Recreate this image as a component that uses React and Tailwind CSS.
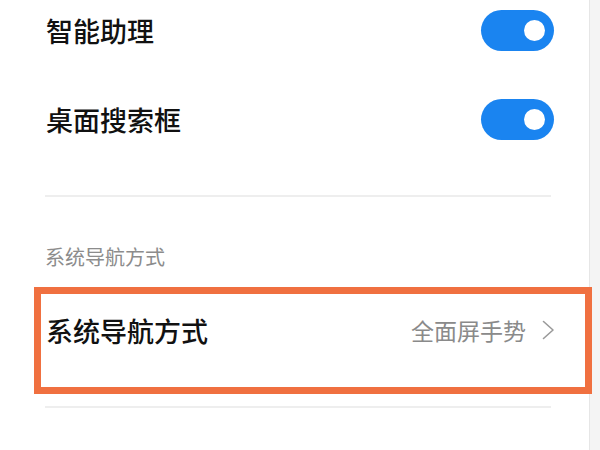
// Settings screen: 桌面设置 with navigation section
const Toggle = () => {
  return (
    <div className="w-[73px] h-[41px] rounded-full bg-[#1a84f0] flex items-center justify-end pr-[9px]">
      <div className="w-[21px] h-[21px] rounded-full bg-white" />
    </div>
  );
};

const SwitchRow = ({ label, className }) => {
  return (
    <div className={`flex items-center justify-between pl-[46px] pr-[35px] ${className}`}>
      <span className="text-[27px] leading-none font-medium text-[#111111]">{label}</span>
      <Toggle />
    </div>
  );
};

const App = () => {
  return (
    <div
      className="w-[600px] h-[450px] flex bg-[#f4f4f4] overflow-hidden"
      style={{ fontFamily: '"Noto Sans CJK SC", "Noto Sans", sans-serif' }}
    >
      {/* Main white panel */}
      <div className="w-[590px] h-full bg-white border-r border-[#e6e6e6] flex flex-col">
        <SwitchRow label="智能助理" className="h-[60px]" />
        <SwitchRow label="桌面搜索框" className="h-[58px] mt-[30px]" />

        <div className="h-[2px] bg-[#eeeeee] ml-[45px] mr-[38px] mt-[47px]" />

        <div className="pl-[45px] mt-[50px] text-[20px] leading-[20px] text-[#8c8c8c]">
          系统导航方式
        </div>

        {/* Highlighted row */}
        <div className="relative z-10 ml-[34px] w-[558px] h-[107px] mt-[20px] border-[7px] border-[#f07040] bg-white">
          <div className="h-[72px] flex items-center justify-between pl-[5px] pr-[30px]">
            <span className="text-[27px] leading-none font-medium text-[#111111]">系统导航方式</span>
            <div className="flex items-center gap-[16px]">
              <span className="text-[23px] leading-none text-[#8a8a8a]">全面屏手势</span>
              <svg width="13" height="20" viewBox="0 0 13 20" fill="none">
                <polyline points="1.5,1.5 11,10 1.5,18.5" stroke="#9a9a9a" strokeWidth="1.6" strokeLinejoin="round" strokeLinecap="round" />
              </svg>
            </div>
          </div>
        </div>

        <div className="h-[2px] bg-[#eeeeee] ml-[45px] mr-[38px] mt-[12px]" />
      </div>
    </div>
  );
};

export default App;
